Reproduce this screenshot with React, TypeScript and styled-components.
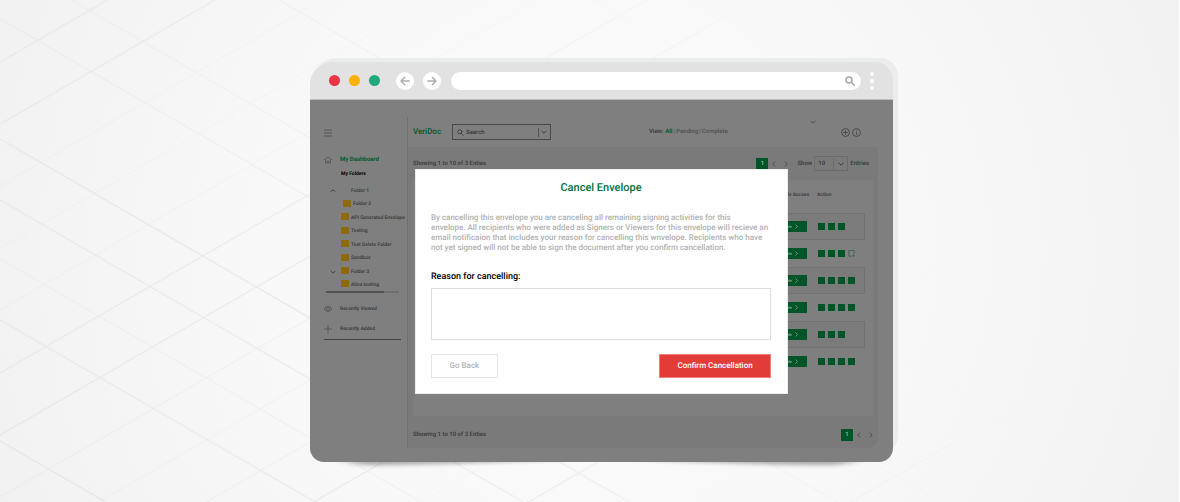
import React from "react";
import styled, { createGlobalStyle, css } from "styled-components";

const GlobalStyle = createGlobalStyle`
  *, *::before, *::after { box-sizing: border-box; }
  body {
    margin: 0;
    font-family: Roboto, "Liberation Sans", sans-serif;
    font-weight: 500;
    text-rendering: geometricPrecision;
    background: #f6f6f6;
  }
  button, input, select, textarea { font: inherit; text-rendering: inherit; margin: 0; padding: 0; border: 0; border-radius: 0; background: none; color: inherit; }
  ul { list-style: none; margin: 0; padding: 0; }
  h1, h2, p { margin: 0; font-weight: inherit; }
  a { color: inherit; text-decoration: none; }
  svg { display: block; flex: none; }
`;

const c = {
  screen: "#7f7f7f",
  panel: "#7a7a7a",
  ink: "#363636",
  faint: "#505050",
  green: "#005427",
  brand: "#005c2c",
};

/* ---------- page and background ---------- */

const Page = styled.div`
  position: relative;
  isolation: isolate;
  min-height: 100vh;
  padding: 58px 0 40px;
  display: grid;
  grid-template-columns: 310fr minmax(560px, 588fr) 282fr;
  align-items: start;
  overflow: hidden;
  box-shadow: inset -1px 0 #fff;
  background: radial-gradient(circle at 50% 50%, #fbfbfb 0, #f8f8f8 320px, #f5f5f5 480px, #f1f1f1 660px);
`;

const Lines = styled.svg`
  position: absolute;
  inset: 0 1px 0 0;
  width: 100%;
  height: 100%;
  z-index: -1;
`;

const rising: [number, number][] = [
  [62, 1], [124, 0.9], [186, 0.3], [248, 0.25], [310, 0.3], [373, 0.8], [435, 0.85], [497, 0.45],
  [559, 0.3], [621, 0.4], [683, 0.8], [745, 0.2], [807, 1], [993, 0.9],
];
const falling: [number, number][] = [
  [-343, 0.3], [-161, 0.6], [-41, 0.5], [19, 0.6], [139, 1], [200, 0.8], [259, 0.45], [320, 0.8], [441, 1],
];

const Backdrop = () => (
  <Lines viewBox="0 0 1180 502" preserveAspectRatio="xMidYMid slice" aria-hidden="true">
    <defs>
      <linearGradient id="fade" gradientUnits="userSpaceOnUse" x1="0" y1="400" x2="900" y2="-100">
        <stop offset="0" stopColor="#e8e8e8" />
        <stop offset="0.3" stopColor="#ebebeb" />
        <stop offset="0.5" stopColor="#ededed" stopOpacity="0.7" />
        <stop offset="0.75" stopColor="#ededed" stopOpacity="0.4" />
        <stop offset="0.9" stopColor="#efefef" stopOpacity="0" />
      </linearGradient>
    </defs>
    <g stroke="url(#fade)" strokeWidth="1.5">
      {rising.map(([y, o]) => (
        <line key={y} x1="0" y1={y} x2="1180" y2={y - 681} opacity={o} />
      ))}
      {falling.map(([y, o]) => (
        <line key={y} x1="0" y1={y} x2="1180" y2={y + 681} opacity={o} />
      ))}
    </g>
  </Lines>
);

/* ---------- browser window ---------- */

const Frame = styled.div`
  grid-column: 2;
  position: relative;
  padding: 4px 5px 0 0;
  isolation: isolate;

  &::before {
    content: "";
    position: absolute;
    inset: 0 0 8px 4px;
    z-index: -1;
    border-radius: 22px 18px 18px 22px;
    background: #ebecec;
  }
`;

const Shadow = styled.svg`
  position: absolute;
  left: 0;
  bottom: -14px;
  width: 100%;
  height: 28px;
  z-index: -1;
  overflow: visible;
`;

const Browser = styled.div`
  border-radius: 22px 18px 14px 14px;
  overflow: hidden;
`;

const Chrome = styled.div`
  height: 38px;
  padding: 0 19px;
  display: flex;
  align-items: center;
  background: #e2e2e2;
  border-bottom: 1px solid #bdbdbd;
`;

const Light = styled.span<{ $color: string }>`
  width: 11px;
  height: 11px;
  margin-right: 9px;
  border-radius: 50%;
  background: ${(p) => p.$color};
`;

const NavButton = styled.button`
  width: 18px;
  height: 18px;
  margin: 0 0 0 7px;
  display: grid;
  place-items: center;
  border-radius: 50%;
  background: #fff;
  color: #adadad;

  & + & { margin-left: 9px; }
`;

const Address = styled.label`
  flex: 1;
  min-width: 0;
  height: 18px;
  margin-left: 10px;
  padding: 0 6px 0 12px;
  display: flex;
  align-items: center;
  border-radius: 9px;
  background: #fff;
  color: #a8a8a8;

  input { flex: 1; min-width: 0; height: 14px; font-size: 9px; outline: 0; }
`;

const MoreButton = styled.button`
  width: 4px;
  margin-left: 9px;
  display: grid;
  gap: 3px;

  i { width: 4px; height: 4px; border-radius: 50%; background: #fff; }
`;

/* ---------- application ---------- */

const Screen = styled.div`
  position: relative;
  display: flex;
  padding: 17px 15px 14px 0;
  background: ${c.screen};
  color: ${c.ink};
  font-size: 6px;
  line-height: 8px;
`;

const Sidebar = styled.nav`
  flex: 0 0 98px;
  min-width: 0;
  padding: 0 6px 0 14px;
  border-right: 1px solid #707070;
`;

const MenuButton = styled.button`
  height: 31px;
  display: flex;
  align-items: center;
  color: ${c.faint};
`;

const SideLink = styled.a<{ $active?: boolean }>`
  display: flex;
  align-items: center;
  gap: 8px;
  height: 20px;
  font-size: 5px;
  white-space: nowrap;
  svg { color: ${c.faint}; }

  ${(p) => p.$active && css`
    height: 17px;
    margin-top: 3px;
    font-size: 6px;
    font-weight: 700;
    color: ${c.brand};
  `}
`;

const FoldersTitle = styled.h2`
  height: 10px;
  padding-left: 17px;
  font-size: 5px;
  font-weight: 700;
  line-height: 12px;
  color: #000;
`;

const Tree = styled.ul`
  height: 106px;
  margin-top: 7px;
  display: flex;
  flex-direction: column;
  justify-content: space-between;
`;

const TreeItem = styled.li<{ $nested?: boolean }>`
  height: 12px;
  padding-left: ${(p) => (p.$nested ? 8 : 6)}px;
  display: grid;
  grid-template-columns: 8px 7px 1fr;
  column-gap: 3px;
  align-items: center;
  font-size: 5px;
  line-height: 12px;
  white-space: nowrap;
`;

const FolderIcon = styled.i<{ $hidden?: boolean }>`
  width: 8px;
  height: 7px;
  margin-bottom: 2px;
  background: ${(p) => (p.$hidden ? "transparent" : "#8f6812")};
`;

const Scroll = styled.div`
  height: 2px;
  margin: 0 2px 6px;
  background: #6f6f6f;
  i { display: block; width: 80%; height: 2px; background: #525252; }
`;

const SideFoot = styled.div`
  border-bottom: 1px solid #444;
`;

const Main = styled.main`
  flex: 1;
  min-width: 0;
`;

const Toolbar = styled.header`
  height: 30px;
  padding: 0 17px 0 5px;
  display: flex;
  align-items: center;
  position: relative;
`;

const Brand = styled.h1`
  width: 39px;
  font-size: 8px;
  line-height: 12px;
  color: ${c.brand};
`;

const SearchBox = styled.label`
  width: 99px;
  height: 16px;
  padding: 0 3px 0 4px;
  display: flex;
  align-items: center;
  gap: 2px;
  border: 1px solid #484848;

  input { flex: 1; min-width: 0; height: 10px; font-size: 6px; outline: 0; }
  input::placeholder { color: ${c.ink}; opacity: 1; }
`;

const Divider = styled.i<{ $tall?: boolean }>`
  width: 1px;
  height: ${(p) => (p.$tall ? 12 : 9)}px;
  background: ${(p) => (p.$tall ? "#6c6c6c" : "#505050")};
`;

const Views = styled.div`
  flex: 1;
  display: flex;
  gap: 1px;
  padding-left: 98px;
  color: ${c.faint};
  b { font-weight: 500; color: ${c.ink}; }
  a[aria-current] { color: ${c.brand}; font-weight: 700; }
`;

const AccountChevron = styled.button`
  position: absolute;
  right: 62px;
  top: 2px;
  color: #444;
`;

const IconButton = styled.button`
  margin-left: 2px;
  color: #464646;
`;

const Panel = styled.section`
  padding: 0 5px 0 5px;
  border-radius: 0 0 10px 0;
  background: ${c.panel};
`;

const PanelBar = styled.div<{ $foot?: boolean }>`
  height: ${(p) => (p.$foot ? 32 : 33)}px;
  display: flex;
  align-items: center;
  justify-content: space-between;
  ${(p) => p.$foot && css`
    margin-right: -4px;
    padding-top: 5px;
  `}
`;

const Pager = styled.div`
  display: flex;
  align-items: center;
`;

const PageNumber = styled.button`
  width: 12px;
  height: 12px;
  background: ${c.green};
  color: #9dbdaa;
`;

const Step = styled.button`
  width: 12px;
  height: 10px;
  display: grid;
  place-items: center;
  color: #444;
`;

const Entries = styled.label`
  margin: 0 4px 0 5px;
  display: flex;
  align-items: center;
  gap: 2px;
`;

const SelectBox = styled.span`
  width: 34px;
  height: 15px;
  padding: 0 3px;
  display: flex;
  align-items: center;
  gap: 4px;
  border: 1px solid #6c6c6c;

  select { flex: 1; min-width: 0; appearance: none; outline: 0; }
`;

const Card = styled.div`
  padding: 0 8px 41px;
  background: ${c.screen};
`;

const Table = styled.table`
  width: 100%;
  border-collapse: collapse;

  th {
    height: 33px;
    padding: 11px 0 0;
    vertical-align: top;
    font-size: 5px;
    font-weight: 500;
    text-align: left;
  }
  td { height: 27px; padding: 0; }
  th:first-child, td:first-child { padding-right: 10px; text-align: right; }
  th:first-child { padding-right: 8px; }
  th:last-child, td:last-child { width: 48px; }
  tbody tr:nth-child(odd) { background: #7b7b7b; outline: 1px solid #727272; outline-offset: -1px; }
`;

const AccessButton = styled.button`
  width: 48px;
  height: 11px;
  padding-right: 8px;
  display: inline-flex;
  align-items: center;
  justify-content: flex-end;
  gap: 2px;
  background: ${c.green};
  color: #92b39f;
  font-size: 4px;
  line-height: 6px;
  vertical-align: middle;
`;

const Actions = styled.div`
  display: flex;
  gap: 3px;
  padding-left: 1px;
`;

const Action = styled.button`
  width: 7px;
  height: 7px;
  background: ${c.green};
`;

const NoteAction = styled.button`
  color: #2c5a3e;
`;

/* ---------- dialog ---------- */

const Overlay = styled.div`
  position: absolute;
  inset: 0;
  display: grid;
  place-items: center;
`;

const Dialog = styled.form`
  width: 64%;
  padding: 10px 16px 15px 15px;
  display: flex;
  flex-direction: column;
  background: #fff;
  border: 1px solid #ececec;
`;

const DialogTitle = styled.h2`
  font-size: 11px;
  line-height: 16px;
  text-align: center;
  color: #00713a;
`;

const Message = styled.p`
  margin: 17px 0 18px;
  font-size: 8px;
  line-height: 10px;
  color: #b2b2b2;
  white-space: nowrap;
`;

const ReasonLabel = styled.label`
  font-size: 9px;
  line-height: 12px;
  color: #000;
`;

const Reason = styled.textarea`
  height: 52px;
  margin: 5px 0 14px;
  padding: 4px;
  border: 1px solid #dcdcdc;
  resize: none;
  outline: 0;
  font-size: 8px;
`;

const DialogActions = styled.div`
  display: flex;
  justify-content: space-between;
`;

const DialogButton = styled.button<{ $danger?: boolean }>`
  width: ${(p) => (p.$danger ? 112 : 67)}px;
  height: 24px;
  border: 1px solid ${(p) => (p.$danger ? "#ee7f7b" : "#e6e6e6")};
  background: ${(p) => (p.$danger ? "#e23c39" : "#fff")};
  color: ${(p) => (p.$danger ? "#fff" : "#b2b2b2")};
  font-size: 8px;
`;

/* ---------- icons ---------- */

const Chevron = ({ d, size = 6 }: { d: "up" | "down" | "left" | "right"; size?: number }) => {
  const paths = { up: "M1 6l4-3 4 3", down: "M1 3l4 4 4-4", left: "M7 1L3 5l4 4", right: "M3 1l4 4-4 4" };
  return (
    <svg width={size} height={size} viewBox="0 0 10 10" fill="none" stroke="currentColor" strokeWidth="1.4">
      <path d={paths[d]} />
    </svg>
  );
};

const Arrow = ({ left }: { left?: boolean }) => (
  <svg width="10" height="10" viewBox="0 0 10 10" fill="none" stroke="currentColor" strokeWidth="1.4" strokeLinecap="round" strokeLinejoin="round">
    <path d={left ? "M9.2 5H1M4.7 1.3L1 5l3.7 3.7" : "M.8 5H9M5.3 1.3L9 5 5.3 8.7"} />
  </svg>
);

const Magnifier = ({ size, weight }: { size: number; weight: number }) => (
  <svg width={size} height={size} viewBox="0 0 10 10" fill="none" stroke="currentColor" strokeWidth={weight} strokeLinecap="round">
    <circle cx="4" cy="4" r="3" />
    <path d="M6.3 6.3L9.2 9.2" />
  </svg>
);

const Icon = ({ children, size = 8 }: { children: React.ReactNode; size?: number }) => (
  <svg width={size} height={size} viewBox="0 0 16 16" fill="none" stroke="currentColor" strokeWidth="1.6">
    {children}
  </svg>
);

/* ---------- data ---------- */

const tree: { name: string; chevron?: "up" | "down"; bare?: boolean; nested?: boolean }[] = [
  { name: "Folder 1", chevron: "up", bare: true },
  { name: "Folder 2", nested: true },
  { name: "API Generated Envelope" },
  { name: "Testing" },
  { name: "Test Delete Folder" },
  { name: "Sandbox" },
  { name: "Folder 3", chevron: "down" },
  { name: "Alina testing" },
];

const rows = [
  { actions: 3 },
  { actions: 3, note: true },
  { actions: 4 },
  { actions: 4 },
  { actions: 3 },
  { actions: 4 },
];

const Pages = () => (
  <>
    <PageNumber type="button">1</PageNumber>
    <Step type="button" aria-label="Previous page"><Chevron d="left" /></Step>
    <Step type="button" aria-label="Next page"><Chevron d="right" /></Step>
  </>
);

export default function App() {
  return (
    <>
      <GlobalStyle />
      <Page>
        <Backdrop />
        <Frame>
          <Shadow viewBox="0 0 588 28" preserveAspectRatio="none" aria-hidden="true">
            <defs>
              <filter id="soft" x="-10%" y="-100%" width="120%" height="300%">
                <feGaussianBlur stdDeviation="9 2" />
              </filter>
            </defs>
            <path d="M18 6L50 17Q150 17 290 9Q430 17 530 17L566 6Z" fill="#000" opacity="0.32" filter="url(#soft)" />
          </Shadow>
          <Browser>
            <Chrome>
              <Light $color="#ea3546" />
              <Light $color="#fcb103" />
              <Light $color="#20a97f" />
              <NavButton type="button" aria-label="Back"><Arrow left /></NavButton>
              <NavButton type="button" aria-label="Forward"><Arrow /></NavButton>
              <Address>
                <input type="text" aria-label="Address" />
                <Magnifier size={10} weight={1.6} />
              </Address>
              <MoreButton type="button" aria-label="More"><i /><i /><i /></MoreButton>
            </Chrome>
            <Screen>
              <Sidebar>
                <MenuButton type="button" aria-label="Menu">
                  <Icon><path d="M0 2h16M0 8h16M0 14h16" /></Icon>
                </MenuButton>
                <SideLink href="#dashboard" $active>
                  <Icon><path d="M0 8l8-6 8 6M3 7v7h3.500v-4h3v4H13V7" /></Icon>
                  My Dashboard
                </SideLink>
                <FoldersTitle>My Folders</FoldersTitle>
                <Tree>
                  {tree.map((t) => (
                    <TreeItem key={t.name} $nested={t.nested}>
                      <span>{t.chevron && <Chevron d={t.chevron} />}</span>
                      <FolderIcon $hidden={t.bare} />
                      <span>{t.name}</span>
                    </TreeItem>
                  ))}
                </Tree>
                <Scroll><i /></Scroll>
                <SideFoot>
                  <SideLink href="#viewed">
                    <Icon><ellipse cx="8" cy="8" rx="7.200" ry="4.800" /><circle cx="8" cy="8" r="3" /></Icon>
                    Recently Viewed
                  </SideLink>
                  <SideLink href="#added">
                    <Icon><path d="M8 0v16M0 8h16" /></Icon>
                    Recently Added
                  </SideLink>
                </SideFoot>
              </Sidebar>
              <Main>
                <Toolbar>
                  <Brand>VeriDoc</Brand>
                  <SearchBox>
                    <Magnifier size={7} weight={1.1} />
                    <input type="text" placeholder="Search" aria-label="Search" />
                    <Divider />
                    <Chevron d="down" />
                  </SearchBox>
                  <Views>
                    <span><b>View:</b> <a href="#all" aria-current="page">All</a> |</span>
                    <a href="#pending">Pending</a>
                    <span>|</span>
                    <a href="#complete">Complete</a>
                  </Views>
                  <AccountChevron type="button" aria-label="Account"><Chevron d="down" /></AccountChevron>
                  <IconButton type="button" aria-label="Add">
                    <Icon size={9}><circle cx="8" cy="8" r="7" /><path d="M8 4v8M4 8h8" /></Icon>
                  </IconButton>
                  <IconButton type="button" aria-label="Information">
                    <Icon size={9}><circle cx="8" cy="8" r="7" /><path d="M8 7v5M8 4v1.500" /></Icon>
                  </IconButton>
                </Toolbar>
                <Panel>
                  <PanelBar>
                    <span>Showing 1 to 10 of 3 Enties</span>
                    <Pager>
                      <Pages />
                      <Entries>
                        Show
                        <SelectBox>
                          <select defaultValue="10"><option>10</option></select>
                          <Divider $tall />
                          <Chevron d="down" />
                        </SelectBox>
                        Entries
                      </Entries>
                    </Pager>
                  </PanelBar>
                  <Card>
                    <Table>
                      <thead>
                        <tr><th>File Access</th><th>Action</th></tr>
                      </thead>
                      <tbody>
                        {rows.map((r, i) => (
                          <tr key={i}>
                            <td><AccessButton type="button">Enable <Chevron d="right" size={5} /></AccessButton></td>
                            <td>
                              <Actions>
                                {Array.from({ length: r.actions }, (_, n) => (
                                  <Action key={n} type="button" aria-label={`Action ${n + 1}`} />
                                ))}
                                {r.note && (
                                  <NoteAction type="button" aria-label="Note">
                                    <Icon size={7}><path d="M8 14H2V1h12v8M10 13h5M12.500 10.500v5" /></Icon>
                                  </NoteAction>
                                )}
                              </Actions>
                            </td>
                          </tr>
                        ))}
                      </tbody>
                    </Table>
                  </Card>
                  <PanelBar $foot>
                    <span>Showing 1 to 10 of 3 Enties</span>
                    <Pager><Pages /></Pager>
                  </PanelBar>
                </Panel>
              </Main>
              <Overlay>
                <Dialog role="dialog" aria-labelledby="dialog-title" onSubmit={(e) => e.preventDefault()}>
                  <DialogTitle id="dialog-title">Cancel Envelope</DialogTitle>
                  <Message>
                    By cancelling this envelope you are canceling all remaining signing activities for this<br />
                    envelope. All recipients who were added as Signers or Viewers for this envelope will recieve an<br />
                    email notificaion that includes your reason for cancelling this wnvelope. Recipients who have<br />
                    not yet signed will not be able to sign the document after you confirm cancellation.
                  </Message>
                  <ReasonLabel htmlFor="reason">Reason for cancelling:</ReasonLabel>
                  <Reason id="reason" />
                  <DialogActions>
                    <DialogButton type="button">Go Back</DialogButton>
                    <DialogButton type="submit" $danger>Confirm Cancellation</DialogButton>
                  </DialogActions>
                </Dialog>
              </Overlay>
            </Screen>
          </Browser>
        </Frame>
      </Page>
    </>
  );
}
